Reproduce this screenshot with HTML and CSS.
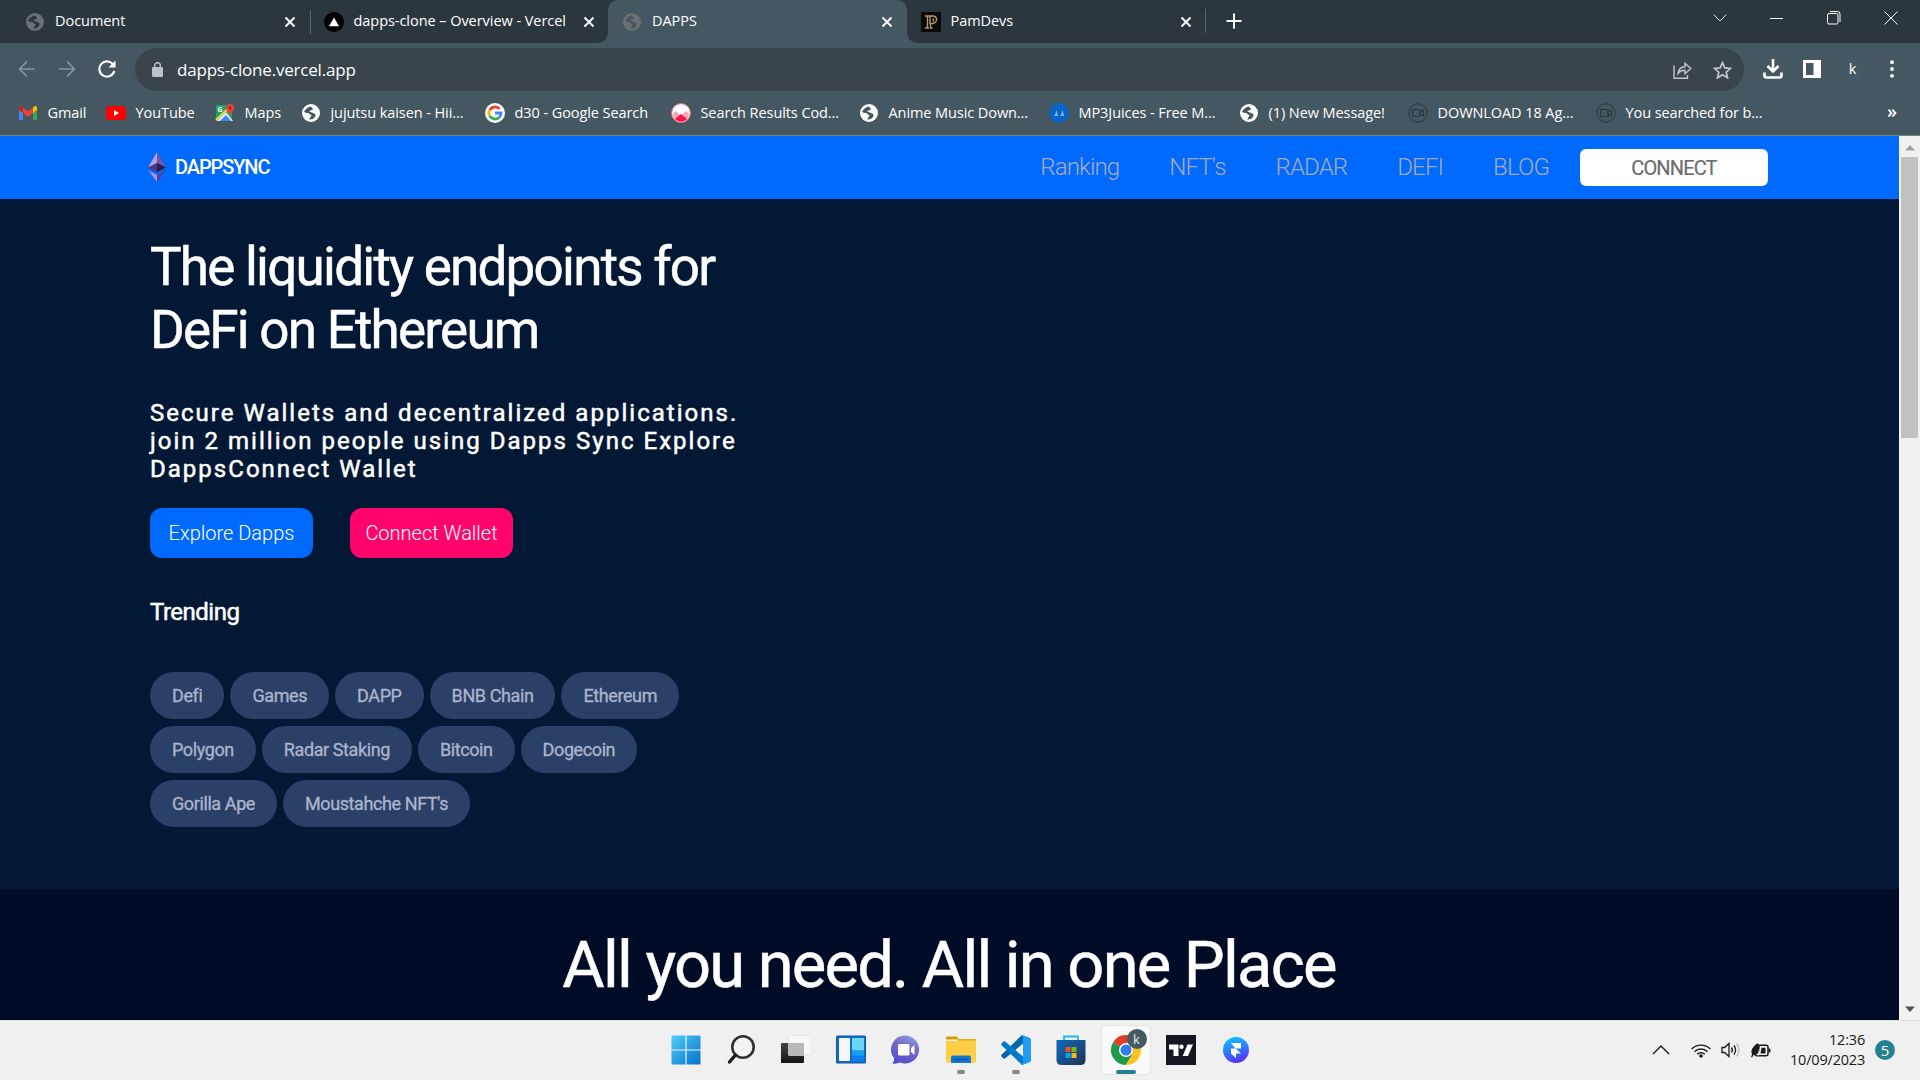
FILE: index.html
```html
<!DOCTYPE html>
<html lang="en">
<head>
<meta charset="utf-8">
<title>DAPPS</title>
<link rel="stylesheet" href="styles.css">
</head>
<body>
<svg class="sprite" aria-hidden="true">
  <defs>
    <symbol id="globe" viewBox="0 0 20 20"><circle cx="10" cy="10" r="9" fill="currentColor"/><path d="M9.5 3.6C6.600 4.500 4.200 6.200 3 8.800c1.800 1.200 3 1.400 4.800 1.300.2 1.300 1.500 1.600 2.700 1.900-.1 1.600-1.500 2.600-2.300 4.400 2 .5 5.300-.9 6.200-3.200.6-1.800-.6-3-2.400-3.300-1.500-.3-2.500-1-3.700-1.300.4-1.400 2-1.100 3.200-1.500.8-1 .1-2.200-2-3.500z" fill="var(--hole)"/></symbol>
    <symbol id="x" viewBox="0 0 12 12"><path d="M1.500 1.500l9 9M10.500 1.500l-9 9" stroke="currentColor" stroke-width="1.900" fill="none"/></symbol>
    <symbol id="cam" viewBox="0 0 20 20"><circle cx="10" cy="10" r="9.200" fill="none" stroke="currentColor"/><path d="M4.500 6.500h7.500v7H4.500zM12 9l3.500-2v6L12 11" fill="none" stroke="currentColor" stroke-width="1.200"/></symbol>
  </defs>
</svg>

<header class="browser">
  <div class="tabs">
    <div class="tab"><svg class="fav dim"><use href="#globe"/></svg><span class="tab-title">Document</span><svg class="close"><use href="#x"/></svg></div>
    <div class="tab divided"><svg class="fav" viewBox="0 0 20 20"><circle cx="10" cy="10" r="10"/><path d="M10 5.500l5 8.700H5z" fill="#fff"/></svg><span class="tab-title">dapps-clone – Overview - Vercel</span><svg class="close"><use href="#x"/></svg></div>
    <div class="tab active"><svg class="fav dim"><use href="#globe"/></svg><span class="tab-title">DAPPS</span><svg class="close"><use href="#x"/></svg></div>
    <div class="tab"><svg class="fav" viewBox="0 0 20 20"><rect width="20" height="20" fill="#0a0808"/><path d="M4 4h8.500q3.500 1 3 4t-3.500 3.500H9.500V16h2M4 16h4M6.500 4v12M9 4v8M12 6.500q1 1.500 0 3" fill="none" stroke="#b8996f" stroke-width="1.400"/></svg><span class="tab-title">PamDevs</span><svg class="close"><use href="#x"/></svg></div>
    <div class="new-tab"><svg width="16" height="16" viewBox="0 0 16 16"><path d="M8 .5v15M.5 8h15" stroke="#fff" stroke-width="2"/></svg></div>
    <div class="window-controls">
      <svg width="14" height="8" viewBox="0 0 14 8"><path d="M.7.7L7 7 13.300.7" fill="none" stroke="#dfe3e5"/></svg>
      <svg width="14" height="14" viewBox="0 0 14 14"><path d="M0 7.500h13" stroke="#fff"/></svg>
      <svg width="14" height="14" viewBox="0 0 14 14"><rect x=".5" y="2.500" width="10.500" height="10.500" rx="1.500" fill="none" stroke="#fff"/><path d="M3 .5h7.500q2.500 0 2.500 2.500V11" fill="none" stroke="#fff"/></svg>
      <svg width="14" height="14" viewBox="0 0 14 14"><path d="M.5.5l13 13M13.500.5l-13 13" stroke="#fff"/></svg>
    </div>
  </div>

  <div class="toolbar">
    <div class="nav-buttons">
      <svg width="18" height="18" viewBox="0 0 18 18"><path d="M17 9H2M9 1.500L1.500 9 9 16.500" fill="none" stroke="#87959b" stroke-width="1.700"/></svg>
      <svg width="18" height="18" viewBox="0 0 18 18"><path d="M1 9h15M9 1.500L16.500 9 9 16.500" fill="none" stroke="#87959b" stroke-width="1.700"/></svg>
      <svg width="18" height="18" viewBox="0 0 18 18"><path d="M15.300 4.800A7.600 7.600 0 1 0 16.300 11" fill="none" stroke="#fff" stroke-width="2.100"/><path d="M17.500.5v7h-7z" fill="#fff"/></svg>
    </div>
    <div class="omnibox">
      <svg width="11" height="15" viewBox="0 0 11 15"><rect y="5" width="11" height="10" rx="1.300" fill="#bdc2c5"/><path d="M2.700 6V3.500a2.800 2.800 0 0 1 5.600 0V6" fill="none" stroke="#bdc2c5" stroke-width="1.400"/></svg>
      <span class="url">dapps-clone.vercel.app</span>
      <svg class="share" width="19" height="18" viewBox="0 0 19 18"><path d="M1 4.500v12.700h13.500V14M5 12.500c.5-4.500 3-6.500 7-6.700V2.300L17.800 7.500 12 12.700V9.300c-3 0-5 .7-7 3.200z" fill="none" stroke="#c3c8ca" stroke-width="1.400"/></svg>
      <svg class="star" width="19" height="18" viewBox="0 0 19 18"><path d="M9.500 1.700l2.300 5.200 5.700.5-4.300 3.800 1.300 5.600-5-3-5 3 1.300-5.600L1.500 7.400l5.700-.5z" fill="none" stroke="#c3c8ca" stroke-width="1.700"/></svg>
    </div>
    <div class="actions">
      <svg width="20" height="20" viewBox="0 0 20 20"><path d="M10 0v12M4.500 7l5.500 5.500L15.500 7M1.500 13.500v3q0 2 2 2h13q2 0 2-2v-3" fill="none" stroke="#fff" stroke-width="2.600"/></svg>
      <svg width="18" height="18" viewBox="0 0 18 18"><path d="M0 0h18v18H0zM3 3v12h7.500V3z" fill="#fff" fill-rule="evenodd"/></svg>
      <span class="profile">k</span>
      <svg width="4" height="18" viewBox="0 0 4 18"><circle cx="2" cy="2.200" r="1.900" fill="#fff"/><circle cx="2" cy="9" r="1.900" fill="#fff"/><circle cx="2" cy="15.800" r="1.900" fill="#fff"/></svg>
    </div>
  </div>

  <nav class="bookmarks">
    <a><svg viewBox="0 0 20 20"><path d="M1 4.500V17h4V9z" fill="#4285f4"/><path d="M19 4.500V17h-4V9z" fill="#34a853"/><path d="M1 4.500q0-2 2.200-1.500L5 4.500V10L1 7z" fill="#c5221f"/><path d="M5 4.500l5 4 5-4V10l-5 4-5-4z" fill="#ea4335"/><path d="M19 4.500q0-2-2.200-1.500L15 4.500V10l4-3z" fill="#fbbc04"/></svg><span>Gmail</span></a>
    <a><svg viewBox="0 0 20 20"><rect y="3" width="20" height="14" rx="3.500" fill="#f00"/><path d="M8 7l5 3-5 3z" fill="#fff"/></svg><span>YouTube</span></a>
    <a><svg viewBox="0 0 20 20"><rect x="1" y="2" width="16" height="16" rx="1" fill="#1fa463"/><path d="M2 18L11 9l7 9z" fill="#e8eaed"/><path d="M5 18l6-6 5 6z" fill="#4285f4"/><path d="M1 17L16 3" stroke="#fbd75b" stroke-width="2"/><text x="2.500" y="9" class="maps-g">G</text><path d="M15 1a4 4 0 0 0-4 4c0 3 3 4 4 8 1-4 4-5 4-8a4 4 0 0 0-4-4z" fill="#ea4335"/><circle cx="15" cy="5" r="1.400" fill="#8c1f16"/></svg><span>Maps</span></a>
    <a><svg><use href="#globe"/></svg><span>jujutsu kaisen - Hii...</span></a>
    <a><svg viewBox="0 0 20 20"><circle cx="10" cy="10" r="10" fill="#fff"/><g fill="none" stroke-width="2.800"><path d="M14.500 6A6 6 0 0 0 4.800 7" stroke="#ea4335"/><path d="M4.800 7a6 6 0 0 0 0 6" stroke="#fbbc05"/><path d="M4.800 13a6 6 0 0 0 9.200 1.500" stroke="#34a853"/><path d="M14 14.500q2-1.800 2-4.500h-6" stroke="#4285f4"/></g></svg><span>d30 - Google Search</span></a>
    <a><svg viewBox="0 0 20 20"><circle cx="10" cy="10" r="9.400" fill="#fff" stroke="#f26d85"/><path d="M2 11l3-3 5 5 5-5 3 3a8 8 0 0 1-16 0z" fill="#ffa3b0"/><path d="M4 16l6-5 6 5a8 8 0 0 1-12 0z" fill="#f5164a"/></svg><span>Search Results Cod...</span></a>
    <a><svg><use href="#globe"/></svg><span>Anime Music Down...</span></a>
    <a><svg viewBox="0 0 20 20"><circle cx="10" cy="10" r="10" fill="#0b63c8"/><path d="M4.500 13q2-1 3-6 1 3 1.500 6zM10.500 13q2-1 3-6 1 3 1.500 6z" fill="#7db3f2"/></svg><span>MP3Juices - Free M...</span></a>
    <a><svg><use href="#globe"/></svg><span>(1) New Message!</span></a>
    <a><svg class="cam"><use href="#cam"/></svg><span>DOWNLOAD 18 Ag...</span></a>
    <a><svg class="cam"><use href="#cam"/></svg><span>You searched for b...</span></a>
    <a class="more">»</a>
  </nav>
</header>

<main class="viewport">
  <div class="page">
    <div class="navbar">
      <div class="brand"><svg width="18" height="30" viewBox="0 0 18 30"><path d="M9 0L0 15.500 9 11z" fill="#b3a0dc"/><path d="M9 0l9 15.500L9 11z" fill="#6f5aa8"/><path d="M0 15.500L9 11v9.500z" fill="#4a3a7c"/><path d="M18 15.500L9 11v9.500z" fill="#2b1d56"/><path d="M0 18l9 5v7z" fill="#a394d6"/><path d="M18 18l-9 5v7z" fill="#54429a"/></svg><span>DAPPSYNC</span></div>
      <nav class="links"><a>Ranking</a><a>NFT's</a><a>RADAR</a><a>DEFI</a><a>BLOG</a></nav>
      <button class="connect">CONNECT</button>
    </div>
    <section class="hero">
      <h1>The liquidity endpoints for<br>DeFi on Ethereum</h1>
      <p class="lead">Secure Wallets and decentralized applications.<br>join 2 million people using Dapps Sync Explore<br>DappsConnect Wallet</p>
      <div class="cta"><button class="explore">Explore Dapps</button><button class="wallet">Connect Wallet</button></div>
      <h2>Trending</h2>
      <div class="tags">
        <div class="tag-row"><span>Defi</span><span>Games</span><span>DAPP</span><span>BNB Chain</span><span>Ethereum</span></div>
        <div class="tag-row"><span>Polygon</span><span>Radar Staking</span><span>Bitcoin</span><span>Dogecoin</span></div>
        <div class="tag-row"><span>Gorilla Ape</span><span>Moustahche NFT's</span></div>
      </div>
    </section>
    <section class="features"><h2>All you need. All in one Place</h2></section>
  </div>
  <div class="scrollbar">
    <svg width="10" height="6" viewBox="0 0 10 6"><path d="M5 0l5 5.500H0z" fill="#a3a3a3"/></svg>
    <div class="thumb"></div>
    <svg class="down" width="10" height="6" viewBox="0 0 10 6"><path d="M0 .5h10L5 6z" fill="#505050"/></svg>
  </div>
</main>

<footer class="taskbar">
  <div class="apps">
    <div class="app"><svg viewBox="0 0 30 30"><defs><linearGradient id="win" x1="0" y1="0" x2="1" y2="1"><stop offset="0" stop-color="#4fd0fb"/><stop offset="1" stop-color="#0670cb"/></linearGradient></defs><path d="M.5.5H14.400V14.400H.5zM15.600.5H29.500V14.400H15.600zM.5 15.600H14.400V29.500H.5zM15.600 15.600H29.500V29.500H15.600z" fill="url(#win)"/></svg></div>
    <div class="app"><svg viewBox="0 0 30 30"><circle cx="17" cy="12" r="10.700" fill="#f4f4f4" stroke="#303030" stroke-width="2.600"/><path d="M9.500 20L3.500 27" stroke="#1c1c1c" stroke-width="3.400" stroke-linecap="round"/></svg></div>
    <div class="app"><svg viewBox="0 0 30 30"><defs><linearGradient id="tv" x1="0" y1="0" x2="0" y2="1"><stop offset="0" stop-color="#434343"/><stop offset="1" stop-color="#151515"/></linearGradient></defs><rect x="0" y="8" width="23" height="20" rx="1" fill="url(#tv)"/><rect x="7.500" y=".5" width="22.500" height="20" rx="1" fill="#f7f7f7" stroke="#dedede" stroke-width=".6"/><path d="M7.500 8H23v12.500H7.500z" fill="#b9b9b9"/></svg></div>
    <div class="app"><svg viewBox="0 0 30 30"><rect y=".5" width="30" height="28" rx="1.500" fill="#1259a8"/><rect x="1" y="1.500" width="28" height="26" fill="#0e6cc4"/><rect x="3" y="3" width="11" height="23" rx="1" fill="#f4f7fb"/><path d="M16 3h12v12.500H16z" fill="#67d7fb"/><path d="M16 16h12v4.800H16z" fill="#189df5"/><path d="M16 21.300h12V26H16z" fill="#0c80ee"/></svg></div>
    <div class="app"><svg viewBox="0 0 30 30"><defs><linearGradient id="chat" x1="0.800" y1="0" x2=".4" y2="1"><stop offset="0" stop-color="#8aa4e8"/><stop offset=".4" stop-color="#7c6bc5"/><stop offset="1" stop-color="#5450cb"/></linearGradient></defs><path d="M15 .5a14 14 0 1 1-6 27q-3 1.500-7.500 1 2-3 1.500-5.500A14 14 0 0 1 15 .5z" fill="url(#chat)"/><rect x="7" y="9" width="11.500" height="11.500" rx="1.500" fill="#fff"/><path d="M20 13l3.500-3v10L20 17z" fill="#fff"/></svg></div>
    <div class="app running"><svg viewBox="0 0 30 30"><path d="M0 3q0-1.500 1.500-1.500h9L13 4.500H0z" fill="#d99a00"/><path d="M0 6h11l2.500-1.800H30V27.500H0z" fill="#ffce45"/><path d="M11.500 4.800H30" stroke="#e0a000" stroke-width="1.200"/><path d="M5 28v-5.500q0-2 2-2h16q2 0 2 2V28z" fill="#1077cc"/><path d="M8 24.500h14" stroke="#07519b" stroke-width="1.300"/></svg></div>
    <div class="app running"><svg viewBox="0 0 30 30"><path d="M22 0v8.500L4 23.500q-1 .5-2-.3L.6 21.500q-.8-1 .2-2L20 1z" fill="#0065a9"/><path d="M22 30v-8.500L4 6.500q-1-.5-2 .3L.6 8.500q-.8 1 .2 2L20 29z" fill="#007acc"/><path d="M21.500 0L29 3q1 .5 1 1.500v21q0 1-1 1.500L21.500 30q-1 0-2-1 2.500.5 2.500-2V3q0-2.500-2.500-2z" fill="#1f9cf0"/></svg></div>
    <div class="app"><svg viewBox="0 0 30 30"><defs><linearGradient id="st" x1="0" y1="0" x2="1" y2="1"><stop offset="0" stop-color="#0d6bbf"/><stop offset="1" stop-color="#213256"/></linearGradient></defs><path d="M8 6V1.500h14V6" fill="none" stroke="#24b4ef" stroke-width="1.800"/><path d="M.5 5h29v20q0 5-5 5h-19q-5 0-5-5z" fill="url(#st)"/><path d="M9.500 12h5v5h-5z" fill="#f25022"/><path d="M15.500 12h5v5h-5z" fill="#7fba00"/><path d="M9.500 18h5v5h-5z" fill="#00a4ef"/><path d="M15.500 18h5v5h-5z" fill="#ffb900"/></svg></div>
    <div class="app current"><svg viewBox="0 0 30 30"><path d="M15 15L2 7.500A15 15 0 0 1 28 7.500z" fill="#e33b2e"/><path d="M15 15L2 7.500A15 15 0 0 0 15 30l6.500-11z" fill="#1e9a4c"/><path d="M21.500 19L15 30A15 15 0 0 0 28 7.500H15V15z" fill="#fcc31e"/><circle cx="15" cy="15" r="7" fill="#fff"/><circle cx="15" cy="15" r="5.500" fill="#2f7de9"/></svg><span class="who">k</span></div>
    <div class="app"><svg viewBox="0 0 30 30"><path d="M0 0h30v30H0z" fill="#131722"/><path d="M3 9.500h9.500v11.500H7.500v-6.500H3zM21.500 9.500h5.500L22 21h-5.300z" fill="#fff"/><circle cx="15.500" cy="11.800" r="2.200" fill="#fff"/></svg></div>
    <div class="app"><svg viewBox="0 0 30 30"><defs><linearGradient id="fr" x1=".3" y1="0" x2=".6" y2="1"><stop offset="0" stop-color="#0cc3ff"/><stop offset=".5" stop-color="#2e7bff"/><stop offset="1" stop-color="#5a2dff"/></linearGradient></defs><circle cx="15" cy="15" r="13" fill="url(#fr)"/><path d="M10 8h10v5.500h-5.500l5.500 5h-5V23l-5-4.500v-5h4.500z" fill="#fff"/></svg></div>
  </div>
  <div class="tray">
    <svg class="caret" width="18" height="10" viewBox="0 0 18 10"><path d="M1 9l8-8 8 8" fill="none" stroke="#1a1a1a" stroke-width="1.400"/></svg>
    <svg class="wifi" width="20" height="15" viewBox="0 0 20 15"><path d="M.7 6a13 13 0 0 1 18.600 0M3.500 8.700a9.200 9.200 0 0 1 13 0M6.200 11.300a5.400 5.400 0 0 1 7.600 0" fill="none" stroke="#1a1a1a" stroke-width="1.400"/><circle cx="10" cy="13" r="1.800" fill="#1a1a1a"/></svg>
    <svg class="speaker" width="20" height="16" viewBox="0 0 20 16"><path d="M1 5.500h2.500L8 1.500v13l-4.500-4H1z" fill="none" stroke="#1a1a1a" stroke-width="1.300"/><path d="M10.500 5.500q1.800 2.500 0 5M13 3.500q3.200 4.500 0 9" fill="none" stroke="#1a1a1a" stroke-width="1.300"/><path d="M15.500 1.500q5 6.500 0 13" fill="none" stroke="#bbb" stroke-width="1.300"/></svg>
    <svg class="battery" width="20" height="15" viewBox="0 0 20 15"><rect x="4" y="2.300" width="13" height="10.400" rx="2" fill="none" stroke="#1a1a1a" stroke-width="1.500"/><path d="M17.500 5.500h1q1 0 1 1v2q0 1-1 1h-1zM10.500 4.800h4v5.700h-5z" fill="#1a1a1a"/><path d="M6.500 0Q10 4 8.500 8T2.500 12L1 14.500 0 14q.5-1.500 1-2.500Q-.5 7 2 4.500T6.500 0z" fill="#1a1a1a"/><path d="M7 13l1-5 1.500-3.500" stroke="#f0f0f0" stroke-width=".8" fill="none"/></svg>
    <div class="clock"><span>12:36</span><span>10/09/2023</span></div>
    <span class="count">5</span>
  </div>
</footer>
</body>
</html>
```
FILE: styles.css
```css
* { box-sizing: border-box; }
body { margin: 0; width: 1920px; height: 1080px; overflow: hidden; display: flex; flex-direction: column; font-family: "Open Sans", sans-serif; }
.sprite { position: absolute; width: 0; height: 0; }
button { border: 0; padding: 0; font: inherit; letter-spacing: inherit; }
svg { flex: none; display: block; }

/* browser chrome */
.browser { height: 136px; flex: none; background: #455760; border-bottom: 1px solid #75837f; color: #fff; }
.tabs { height: 43px; background: #2c373d; display: flex; padding-left: 11px; }
.tab { width: 298.500px; display: flex; align-items: center; padding: 0 14px; font-size: 14.500px; position: relative; }
.tab .fav { width: 20px; height: 20px; margin-right: 10px; }
.tab-title { flex: 1; white-space: nowrap; letter-spacing: -0.050px; line-height: 40px; margin-top: -2px; }
.fav.dim { color: #6b7073; --hole: #2c373d; }
.active .fav.dim { --hole: #455760; }
.close { width: 12px; height: 12px; margin-right: -0.500px; }
.divided::before { content: ""; position: absolute; left: 0; top: 10px; width: 1px; height: 24px; background: #5a666c; }
.tab.active { background: #455760; border-radius: 10px 10px 0 0; }
.tab.active::before, .tab.active::after { content: ""; position: absolute; bottom: 0; width: 10px; height: 10px; }
.tab.active::before { left: -10px; background: radial-gradient(circle at 0 0, transparent 9.500px, #455760 10px); }
.tab.active::after { right: -10px; background: radial-gradient(circle at 100% 0, transparent 9.500px, #455760 10px); }
.new-tab { display: flex; align-items: center; padding-left: 20px; height: 24px; margin-top: 9px; border-left: 1px solid #5a666c; }
.window-controls { margin-left: auto; display: flex; gap: 43px; align-items: center; padding-right: 22px; height: 36px; }
.toolbar { height: 48px; padding-top: 5px; display: flex; align-items: center; }
.nav-buttons { width: 135px; padding-left: 18px; display: flex; gap: 22px; margin-top: -2px; }
.omnibox { width: 1609px; height: 43px; border-radius: 22px; background: #39454b; display: flex; align-items: center; padding: 0 12px 0 17px; }
.url { margin-left: 14px; font-size: 17px; letter-spacing: -0.200px; line-height: 24px; }
.share { margin-left: auto; }
.star { margin-left: 21px; }
.actions { flex: 1; display: grid; grid-template-columns: 40px 36px 51px 4px; align-items: center; padding-left: 19px; margin-top: -2px; }
.profile { width: 27px; height: 27px; border-radius: 50%; border: 1px solid #3f5f6c; background: #435a65; text-align: center; font-size: 14.500px; line-height: 25px; }
.bookmarks { display: grid; grid-template-columns: 88px 109px 86px 184px 186px 188px 190px 190px 169px 188px 1fr 32px; padding: 0 1px 0 18px; height: 44px; font-size: 14.500px; letter-spacing: -0.080px; white-space: nowrap; }
.bookmarks a { display: flex; align-items: center; gap: 9.500px; }
.bookmarks svg { width: 20px; height: 20px; color: #fff; --hole: #455760; }
.bookmarks svg.cam { color: #2c373d; }
.bookmarks span { line-height: 20px; margin-top: -1px; }
.bookmarks .more { font-size: 18px; font-weight: 600; margin-top: -5px; }
.maps-g { font: bold 7px "Open Sans", sans-serif; fill: #fff; }

/* web page */
.viewport { flex: 1; display: flex; min-height: 0; font-family: Roboto, sans-serif; }
.page { flex: 1; display: flex; flex-direction: column; }
.navbar { height: 63px; background: #006aff; display: flex; align-items: center; padding: 0 131px 0 148px; }
.brand { display: flex; align-items: center; gap: 9px; color: #fff; font-size: 20px; font-weight: 500; letter-spacing: -1.100px; margin-top: -1px; }
.links { display: flex; gap: 50px; margin: -2px 0 0 auto; font-size: 24px; font-weight: 300; color: #a6abb3; letter-spacing: -0.850px; }
.connect { width: 188px; height: 37px; margin-left: 31px; border-radius: 6px; background: #fff; color: #6c6c6c; font-size: 20px; letter-spacing: -0.850px; -webkit-text-stroke: 0.2px; }
.hero { height: 690px; background: #031835; color: #fff; padding: 37px 150px 0; }
h1 { margin: 0; font-weight: 400; font-size: 53px; line-height: 63px; letter-spacing: -1.770px; -webkit-text-stroke: 0.5px; }
.lead { margin: 37px 0 0; font-size: 24px; line-height: 28px; letter-spacing: 2.020px; -webkit-text-stroke: 0.5px; }
.cta { display: flex; gap: 37px; margin-top: 25px; }
.cta button { width: 163px; height: 50px; border-radius: 12px; color: #fff; font-size: 20px; font-weight: 300; letter-spacing: 0; }
.explore { background: #006aff; }
.wallet { background: #ff056c; }
.hero h2 { margin: 40px 0 0; font-size: 24px; font-weight: 400; line-height: 28px; letter-spacing: -0.500px; -webkit-text-stroke: 0.5px; }
.tags { margin-top: 46px; display: flex; flex-direction: column; gap: 7px; }
.tag-row { display: flex; gap: 6px; }
.tag-row span { height: 47px; border-radius: 24px; padding: 0 22px; line-height: 48px; background: #2b4067; color: #abb5ce; font-size: 18px; letter-spacing: -0.400px; -webkit-text-stroke: 0.3px; }
.features { flex: 1; background: #000c26; text-align: center; }
.features h2 { margin: 38px 0 0; color: #fff; font-weight: 400; font-size: 65px; line-height: 76px; letter-spacing: -1.770px; -webkit-text-stroke: 0.5px; padding-right: 1px; }
.scrollbar { width: 21px; background: #f1f1f1; display: flex; flex-direction: column; align-items: center; padding: 9px 0 8px; }
.thumb { width: 17px; height: 281px; background: #c1c1c1; margin-top: 6px; }
.down { margin-top: auto; }

/* taskbar */
.taskbar { height: 60px; flex: none; background: #f0f0f0; border-top: 1px solid #e2e2e2; display: flex; align-items: center; justify-content: space-between; padding: 0 25px 1px 661.500px; }
.apps { display: flex; gap: 7px; }
.app { width: 48px; height: 48px; display: flex; align-items: center; justify-content: center; position: relative; border-radius: 5px; }
.app svg { width: 30px; height: 30px; }
.app.running::after, .app.current::after { content: ""; position: absolute; bottom: 0; left: 20px; width: 8px; height: 4px; border-radius: 2px; background: #868686; }
.app.current { background: #fafafa; box-shadow: 0 0 0 1px #e6e6e6; }
.app.current::after { left: 14px; width: 20px; background: #25808f; }
.who { position: absolute; left: 25px; top: 3px; width: 20px; height: 20px; border-radius: 50%; background: #455a64; color: #e8eef0; font-size: 13px; line-height: 20px; text-align: center; }
.tray { display: flex; align-items: center; }
.wifi { margin-left: 21px; margin-right: 10px; }
.battery { margin-left: 10px; }
.clock { width: 94px; display: flex; flex-direction: column; align-items: flex-end; font-size: 14.500px; line-height: 20px; color: #1a1a1a; letter-spacing: -0.200px; margin-top: -1px; }
.count { width: 20px; height: 20px; margin-left: 10px; border-radius: 50%; background: #25808f; color: #fff; font-size: 15px; line-height: 20px; text-align: center; }
```
